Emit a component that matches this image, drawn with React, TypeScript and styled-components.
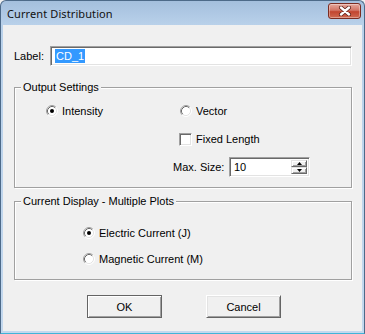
import React from 'react';
import styled, { createGlobalStyle } from 'styled-components';

const GlobalStyle = createGlobalStyle`
  html, body {
    margin: 0;
    padding: 0;
    background: #f0f0f0;
  }
  body {
    font-family: "Liberation Sans", Arial, sans-serif;
    font-size: 11px;
    color: #000;
  }
`;

const Window = styled.div`
  box-sizing: border-box;
  width: 365px;
  height: 334px;
  display: flex;
  flex-direction: column;
  border: 1px solid #4d6a89;
  border-bottom-color: #3fb4d8;
  border-radius: 6px 6px 0 0;
  background: linear-gradient(to bottom, #a4bfdd 0px, #b9d1ea 24px, #c3d8ee 100%);
  overflow: hidden;
`;

const TitleBar = styled.div`
  height: 24px;
  flex: none;
  display: flex;
  align-items: center;
  justify-content: space-between;
  padding: 0 3px 0 6px;
`;

const Title = styled.span`
  font-family: "Segoe UI", "Noto Sans", "Liberation Sans", sans-serif;
  font-size: 11px;
  letter-spacing: 0.1px;
  color: #111;
  padding-top: 1px;
`;

const CloseButton = styled.div`
  box-sizing: border-box;
  width: 33px;
  height: 16px;
  margin-top: -4px;
  display: flex;
  align-items: center;
  justify-content: center;
  border: 1px solid #7b2c22;
  border-radius: 3px;
  background: linear-gradient(to bottom, #e5a89d 0%, #d27465 45%, #c2452f 55%, #cf6a52 100%);
  box-shadow: inset 0 0 0 1px rgba(255, 255, 255, 0.35);
`;

const Client = styled.div`
  flex: 1;
  margin: 0 2px 2px 2px;
  background: #f0f0f0;
  padding: 21px 10px 0 11px;
  display: flex;
  flex-direction: column;
`;

const LabelRow = styled.div`
  display: flex;
  align-items: center;
  height: 20px;
`;

const FieldLabel = styled.span<{ $width: number }>`
  width: ${p => p.$width}px;
  flex: none;
`;

const Sunken = styled.div<{ $width: number }>`
  box-sizing: border-box;
  width: ${p => p.$width}px;
  height: 20px;
  background: #fff;
  border-style: solid;
  border-width: 1px;
  border-color: #a0a0a0 #fff #fff #a0a0a0;
  box-shadow: inset 1px 1px 0 #696969, inset -1px -1px 0 #e3e3e3;
  display: flex;
  align-items: center;
  padding-left: 4px;
  position: relative;
`;

const Selected = styled.span`
  background: #3399ff;
  color: #fff;
  line-height: 14px;
  padding: 0 1px;
`;

const Group = styled.div<{ $top: number; $height: number }>`
  box-sizing: border-box;
  position: relative;
  margin-top: ${p => p.$top}px;
  height: ${p => p.$height}px;
  width: 338px;
  border: 1px solid #a0a0a0;
  box-shadow: inset 1px 1px 0 #fff, 1px 1px 0 #fff;
`;

const Legend = styled.span`
  position: absolute;
  top: -7px;
  left: 6px;
  padding: 0 2px;
  line-height: 13px;
  background: #f0f0f0;
`;

const Rows = styled.div<{ $top: number; $gap: number }>`
  display: flex;
  flex-direction: column;
  gap: ${p => p.$gap}px;
  padding-top: ${p => p.$top}px;
`;

const Row = styled.div<{ $indent: number }>`
  display: flex;
  align-items: center;
  height: 20px;
  padding-left: ${p => p.$indent}px;
`;

const Option = styled.label<{ $width?: number }>`
  display: flex;
  align-items: center;
  gap: 4px;
  width: ${p => (p.$width ? `${p.$width}px` : 'auto')};
`;

const CheckBox = styled.span`
  box-sizing: border-box;
  width: 13px;
  height: 13px;
  background: #fff;
  border-style: solid;
  border-width: 1px;
  border-color: #a0a0a0 #fff #fff #a0a0a0;
  box-shadow: inset 1px 1px 0 #696969, inset -1px -1px 0 #e3e3e3;
`;

const Spinner = styled.div`
  position: absolute;
  right: 2px;
  top: 2px;
  bottom: 2px;
  display: flex;
  flex-direction: column;
`;

const SpinButton = styled.div`
  box-sizing: border-box;
  width: 16px;
  flex: 1;
  display: flex;
  align-items: center;
  justify-content: center;
  background: #f0f0f0;
  border-style: solid;
  border-width: 1px;
  border-color: #e3e3e3 #696969 #696969 #e3e3e3;
  box-shadow: inset 1px 1px 0 #fff, inset -1px -1px 0 #a0a0a0;
`;

const ButtonRow = styled.div`
  display: flex;
  gap: 44px;
  margin-top: 15px;
  padding-left: 73px;
`;

const Button = styled.div<{ $default?: boolean }>`
  box-sizing: border-box;
  width: 75px;
  height: 23px;
  display: flex;
  align-items: center;
  justify-content: center;
  background: #f0f0f0;
  border: 1px solid ${p => (p.$default ? '#646464' : '#fff')};
  border-right-color: #646464;
  border-bottom-color: #646464;
  box-shadow: ${p =>
    p.$default
      ? 'inset 1px 1px 0 #fff, inset -1px -1px 0 #a0a0a0, inset 2px 2px 0 #f0f0f0'
      : 'inset 1px 1px 0 #e3e3e3, inset -1px -1px 0 #a0a0a0'};
`;

const RadioMark: React.FC<{ checked?: boolean }> = ({ checked }) => (
  <svg width="12" height="12" viewBox="0 0 12 12">
    <circle cx="6" cy="6" r="5" fill="#fff" />
    <path d="M9.89 2.11 A5.5 5.5 0 0 0 2.11 9.89" stroke="#a0a0a0" fill="none" />
    <path d="M9.18 2.82 A4.5 4.5 0 0 0 2.82 9.18" stroke="#696969" fill="none" />
    <path d="M9.89 2.11 A5.5 5.5 0 0 1 2.11 9.89" stroke="#fff" fill="none" />
    <path d="M9.18 2.82 A4.5 4.5 0 0 1 2.82 9.18" stroke="#e3e3e3" fill="none" />
    {checked && <circle cx="6" cy="6" r="2" fill="#000" />}
  </svg>
);

const Arrow: React.FC<{ up?: boolean }> = ({ up }) => (
  <svg width="5" height="3" viewBox="0 0 5 3">
    <path d={up ? 'M2.5 0 L5 3 L0 3 Z' : 'M0 0 L5 0 L2.5 3 Z'} fill="#000" />
  </svg>
);

const App: React.FC = () => {
  return (
    <>
      <GlobalStyle />
      <Window>
        <TitleBar>
          <Title>Current Distribution</Title>
          <CloseButton>
            <svg width="14" height="10" viewBox="0 0 14 10">
              <path d="M3 1.5 L11 8.5 M11 1.5 L3 8.5" stroke="#5b1e16" strokeWidth="4" strokeLinecap="round" />
              <path d="M3 1.5 L11 8.5 M11 1.5 L3 8.5" stroke="#fff" strokeWidth="2.4" strokeLinecap="round" />
            </svg>
          </CloseButton>
        </TitleBar>
        <Client>
          <LabelRow>
            <FieldLabel $width={36}>Label:</FieldLabel>
            <Sunken $width={302}>
              <Selected>CD_1</Selected>
            </Sunken>
          </LabelRow>

          <Group $top={21} $height={101}>
            <Legend>Output Settings</Legend>
            <Rows $top={13} $gap={8}>
              <Row $indent={31}>
                <Option $width={134}>
                  <RadioMark checked />
                  Intensity
                </Option>
                <Option>
                  <RadioMark />
                  Vector
                </Option>
              </Row>
              <Row $indent={164}>
                <Option>
                  <CheckBox />
                  Fixed Length
                </Option>
              </Row>
              <Row $indent={158}>
                <FieldLabel $width={56}>Max. Size:</FieldLabel>
                <Sunken $width={81}>
                  10
                  <Spinner>
                    <SpinButton><Arrow up /></SpinButton>
                    <SpinButton><Arrow /></SpinButton>
                  </Spinner>
                </Sunken>
              </Row>
            </Rows>
          </Group>

          <Group $top={13} $height={79}>
            <Legend>Current Display - Multiple Plots</Legend>
            <Rows $top={21} $gap={6}>
              <Row $indent={68}>
                <Option>
                  <RadioMark checked />
                  Electric Current (J)
                </Option>
              </Row>
              <Row $indent={68}>
                <Option>
                  <RadioMark />
                  Magnetic Current (M)
                </Option>
              </Row>
            </Rows>
          </Group>

          <ButtonRow>
            <Button $default>OK</Button>
            <Button>Cancel</Button>
          </ButtonRow>
        </Client>
      </Window>
    </>
  );
};

export default App;
